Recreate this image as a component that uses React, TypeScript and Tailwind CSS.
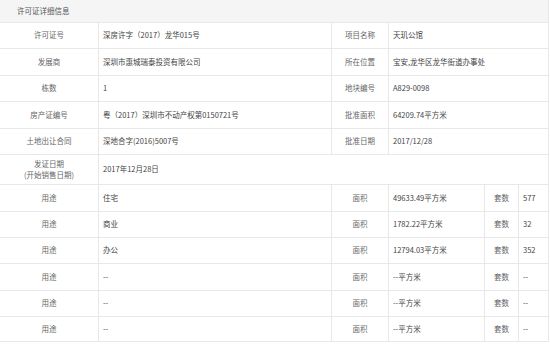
const TOP_ROWS = [
  ["许可证号", "深房许字（2017）龙华015号", "项目名称", "天玑公馆"],
  ["发展商", "深圳市惠城瑞泰投资有限公司", "所在位置", "宝安,龙华区龙华街道办事处"],
  ["栋数", "1", "地块编号", "A829-0098"],
  ["房产证编号", "粤（2017）深圳市不动产权第0150721号", "批准面积", "64209.74平方米"],
  ["土地出让合同", "深地合字(2016)5007号", "批准日期", "2017/12/28"],
];

const USES = [
  { use: "住宅", area: "49633.49平方米", units: "577" },
  { use: "商业", area: "1782.22平方米", units: "32" },
  { use: "办公", area: "12794.03平方米", units: "352" },
  { use: "--", area: "--平方米", units: "--" },
  { use: "--", area: "--平方米", units: "--" },
  { use: "--", area: "--平方米", units: "--" },
];

const label = "flex items-center justify-center text-[#666]";
const value = "flex items-center pl-[4px] text-[#444] border-l border-[#e8e8e8]";
const labelR = "flex items-center justify-center text-[#666] border-l border-[#e8e8e8]";

export default function App() {
  return (
    <div className="h-[344px] w-[550px] overflow-hidden bg-white font-['Noto_Sans_CJK_SC',sans-serif] text-[7.5px] leading-[1.4]">
      <div className="w-[549px] border-r border-[#e8e8e8]">
        <div className="flex h-[22px] items-center bg-[#f5f5f5] pl-[17px] text-[#555]">
          许可证详细信息
        </div>

        {TOP_ROWS.map((r, i) => (
          <div
            key={i}
            className="grid h-[26.4px] grid-cols-[98px_233px_57px_1fr] border-t border-[#e8e8e8]"
          >
            <div className={label}>{r[0]}</div>
            <div className={value}>{r[1]}</div>
            <div className={labelR}>{r[2]}</div>
            <div className={value}>{r[3]}</div>
          </div>
        ))}

        <div className="grid h-[30.5px] grid-cols-[98px_1fr] border-t border-[#e8e8e8]">
          <div className="flex flex-col items-center justify-center text-[#666]">
            <span>发证日期</span>
            <span>(开始销售日期)</span>
          </div>
          <div className={value}>2017年12月28日</div>
        </div>

        {USES.map((u, i) => (
          <div
            key={i}
            className="grid h-[26.3px] grid-cols-[98px_233px_57px_96px_34px_1fr] border-t border-[#e8e8e8] last:border-b"
          >
            <div className={label}>用途</div>
            <div className={value}>{u.use}</div>
            <div className={labelR}>面积</div>
            <div className={value}>{u.area}</div>
            <div className={labelR}>套数</div>
            <div className={value}>{u.units}</div>
          </div>
        ))}
      </div>
    </div>
  );
}
